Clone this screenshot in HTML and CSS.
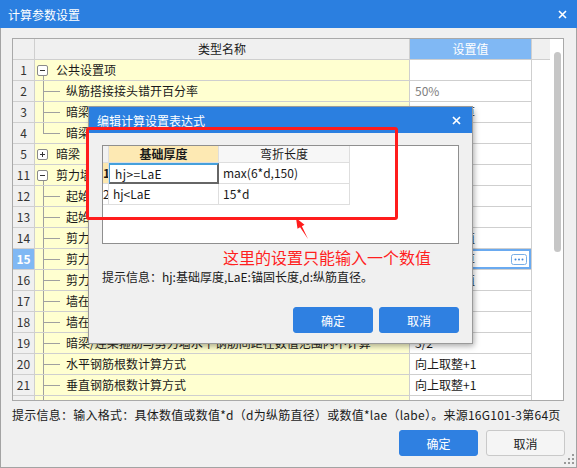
FILE: index.html
```html
<!DOCTYPE html>
<html lang="zh-CN">
<head>
<meta charset="utf-8">
<title>计算参数设置</title>
<link rel="stylesheet" href="styles.css">
</head>
<body>
<div class="window">
  <div class="titlebar">
    <span class="title">计算参数设置</span>
    <svg class="close" width="9" height="9" viewBox="0 0 9 9"><path d="M1 1L8 8M8 1L1 8" stroke="#fff" stroke-width="1.6" fill="none"/></svg>
  </div>
  <div class="content">
    <div class="grid-box">
      <div class="grid">
        <div class="row head">
          <div class="c num"></div><div class="c name">类型名称</div><div class="c val">设置值</div><div class="c fill"></div>
        </div>
        <div class="row"><div class="c num">1</div><div class="c name group open"><span class="tbox"></span>公共设置项</div><div class="c val"></div><div class="c fill"></div></div>
        <div class="row"><div class="c num">2</div><div class="c name child">纵筋搭接接头错开百分率</div><div class="c val muted">50%</div><div class="c fill"></div></div>
        <div class="row"><div class="c num">3</div><div class="c name child">暗梁纵筋锚固计算设置</div><div class="c val">按规范计算</div><div class="c fill"></div></div>
        <div class="row"><div class="c num">4</div><div class="c name child last">暗梁箍筋加密区设置</div><div class="c val">是</div><div class="c fill"></div></div>
        <div class="row"><div class="c num">5</div><div class="c name group"><span class="tbox plus"></span>暗梁</div><div class="c val"></div><div class="c fill"></div></div>
        <div class="row"><div class="c num">11</div><div class="c name group open"><span class="tbox"></span>剪力墙</div><div class="c val"></div><div class="c fill"></div></div>
        <div class="row"><div class="c num">12</div><div class="c name child">起始水平钢筋距楼面距离</div><div class="c val">50</div><div class="c fill"></div></div>
        <div class="row"><div class="c num">13</div><div class="c name child">起始竖向钢筋距暗柱边距离</div><div class="c val">s/2</div><div class="c fill"></div></div>
        <div class="row"><div class="c num">14</div><div class="c name child">剪力墙水平钢筋搭接长度</div><div class="c val">按规范取值</div><div class="c fill"></div></div>
        <div class="row"><div class="c num selected">15</div><div class="c name child">剪力墙竖向钢筋基础插筋弯折长度</div><div class="c val selected"><span>按规范计算</span><svg class="more" width="16" height="11" viewBox="0 0 16 11"><rect x="0.5" y="0.5" width="15" height="10" rx="2" fill="#fff" stroke="#78aee6"/><circle cx="4.5" cy="5.5" r="1" fill="#3f86d8"/><circle cx="8" cy="5.5" r="1" fill="#3f86d8"/><circle cx="11.5" cy="5.5" r="1" fill="#3f86d8"/></svg></div><div class="c fill"></div></div>
        <div class="row"><div class="c num">16</div><div class="c name child">剪力墙竖向钢筋顶部锚固长度</div><div class="c val">按规范取值</div><div class="c fill"></div></div>
        <div class="row"><div class="c num">17</div><div class="c name child">墙在基础内的水平钢筋根数</div><div class="c val">间距500</div><div class="c fill"></div></div>
        <div class="row"><div class="c num">18</div><div class="c name child">墙在基础内的拉筋设置</div><div class="c val">否</div><div class="c fill"></div></div>
        <div class="row"><div class="c num">19</div><div class="c name child">暗梁/连梁箍筋与剪力墙水平钢筋间距在数值范围内不计算</div><div class="c val">3/2</div><div class="c fill"></div></div>
        <div class="row"><div class="c num">20</div><div class="c name child">水平钢筋根数计算方式</div><div class="c val">向上取整+1</div><div class="c fill"></div></div>
        <div class="row"><div class="c num">21</div><div class="c name child">垂直钢筋根数计算方式</div><div class="c val">向上取整+1</div><div class="c fill"></div></div>
        <div class="row"><div class="c num">22</div><div class="c name child">墙拉筋布置构造</div><div class="c val">矩形布置</div><div class="c fill"></div></div>
      </div>
      <div class="vscroll"><div class="thumb"></div></div>
    </div>
    <div class="hint">提示信息：输入格式：具体数值或数值*d（d为纵筋直径）或数值*lae（labe）。来源16G101-3第64页</div>
    <div class="actions">
      <button class="btn primary">确定</button>
      <button class="btn">取消</button>
    </div>
  </div>

  <div class="dialog">
    <div class="dlg-title">
      <span class="title">编辑计算设置表达式</span>
      <svg class="close" width="9" height="9" viewBox="0 0 9 9"><path d="M1 1L8 8M8 1L1 8" stroke="#fff" stroke-width="1.7" fill="none"/></svg>
    </div>
    <div class="dlg-body">
      <div class="egrid">
        <div class="erow head">
          <div class="ec rh"></div><div class="ec h1">基础厚度</div><div class="ec h2">弯折长度</div>
        </div>
        <div class="erow">
          <div class="ec rh cur">1</div><div class="ec focus">hj&gt;=LaE</div><div class="ec">max(6*d,150)</div>
        </div>
        <div class="erow">
          <div class="ec rh">2</div><div class="ec">hj&lt;LaE</div><div class="ec">15*d</div>
        </div>
      </div>
      <div class="dlg-hint">提示信息：hj:基础厚度,LaE:锚固长度,d:纵筋直径。</div>
      <div class="dlg-actions">
        <button class="btn primary wide">确定</button>
        <button class="btn primary wide">取消</button>
      </div>
    </div>
  </div>

  <div class="annot-rect"></div>
  <svg class="annot-arrow" width="24" height="28" viewBox="0 0 24 28"><polygon points="8,4 16.5,10.7 13.9,12.2 20,25 12.1,13.2 9.5,14.7" fill="#ff1c1c"/></svg>
  <div class="annot-text">这里的设置只能输入一个数值</div>
  <svg class="grip" width="12" height="12" viewBox="0 0 12 12"><g fill="#9a9a9a"><rect x="9" y="1" width="2" height="2"/><rect x="9" y="5" width="2" height="2"/><rect x="5" y="5" width="2" height="2"/><rect x="9" y="9" width="2" height="2"/><rect x="5" y="9" width="2" height="2"/><rect x="1" y="9" width="2" height="2"/></g></svg>
</div>
</body>
</html>
```

FILE: styles.css
```css
* { box-sizing: border-box; }
html, body { margin: 0; padding: 0; }
body {
  font-family: "Noto Sans CJK SC", "Microsoft YaHei", sans-serif;
  font-size: 12px;
  color: #1a1a1a;
  background: #fff;
}
.window {
  position: relative;
  width: 577px;
  height: 468px;
  background: #f0f0f0;
  box-shadow: inset 0 0 0 1px #a3a3a3;
  display: flex;
  flex-direction: column;
  overflow: hidden;
}
.titlebar {
  height: 28px;
  flex: none;
  background: #2b7fe0;
  color: #fff;
  display: flex;
  align-items: center;
  padding: 0 10px 0 8px;
}
.titlebar .title, .dlg-title .title { flex: 1; }
.close { display: block; }

.content {
  flex: 1;
  padding: 10px 13px 0 12px;
  display: flex;
  flex-direction: column;
}
.grid-box {
  height: 363px;
  flex: none;
  border: 1px solid #a9a9a9;
  background: #fff;
  display: flex;
  overflow: hidden;
}
.grid { flex: 1; overflow: hidden; }
.row {
  display: grid;
  grid-template-columns: 22px 375px 122px 18px;
  height: 21px;
}
.c {
  border-right: 1px solid #cfcfcf;
  border-bottom: 1px solid #cfcfcf;
  line-height: 20px;
  white-space: nowrap;
  overflow: hidden;
}
.c.fill { border-right: none; border-bottom: none; }
.head .c { background: #f0f0f0; text-align: center; }
.head .c.fill { border-bottom: 1px solid #cfcfcf; }
.head .c.val { background: #80b8f4; color: #fff; padding-left: 0; }
.num { background: #f0f0f0; text-align: center; color: #333; }
.num.selected { background: #80b8f4; color: #fff; font-weight: bold; }
.name { background: #ffffd0; }
.name.group { display: flex; align-items: center; padding-left: 2px; }
.name.group.open {
  background: linear-gradient(#a0a0a0, #a0a0a0) 8px 15px / 1px 6px no-repeat, #ffffd0;
}
.name.child {
  padding-left: 31px;
  background:
    linear-gradient(#a0a0a0, #a0a0a0) 8px 0 / 1px 100% no-repeat,
    linear-gradient(#a0a0a0, #a0a0a0) 8px 10px / 17px 1px no-repeat,
    #ffffd0;
}
.name.child.last {
  background:
    linear-gradient(#a0a0a0, #a0a0a0) 8px 0 / 1px 11px no-repeat,
    linear-gradient(#a0a0a0, #a0a0a0) 8px 10px / 17px 1px no-repeat,
    #ffffd0;
}
.tbox {
  flex: none;
  width: 11px;
  height: 11px;
  margin-right: 8px;
  border: 1px solid #8a8a8a;
  border-radius: 2px;
  background: linear-gradient(#333, #333) center / 5px 1px no-repeat, #fff;
}
.tbox.plus {
  background:
    linear-gradient(#333, #333) center / 5px 1px no-repeat,
    linear-gradient(#333, #333) center / 1px 5px no-repeat,
    #fff;
}
.val { padding-left: 5px; background: #fff; }
.val.muted { color: #808080; }
.val.selected {
  box-shadow: inset 0 0 0 2px #6aaaf0;
  display: flex;
  align-items: center;
  justify-content: space-between;
  padding-right: 4px;
}
.more { display: block; }

.vscroll { width: 13px; flex: none; background: #fff; padding-top: 13px; }
.thumb { width: 7px; height: 200px; margin-left: 4px; border-radius: 4px; background: #c6c6c6; }

.hint { margin-top: 4px; line-height: 20px; white-space: nowrap; letter-spacing: 0.25px; }
.actions {
  margin-top: 5px;
  margin-right: -1px;
  display: flex;
  justify-content: flex-end;
  gap: 8px;
}
.btn {
  font: inherit;
  width: 79px;
  height: 26px;
  border-radius: 3px;
  border: 1px solid #c9c9c9;
  background: #f5f5f5;
  color: #222;
  padding: 0;
}
.btn.primary { background: #2f80e1; border-color: #2f80e1; color: #fff; }
.btn.wide { width: 80px; }

.dialog {
  position: absolute;
  left: 89px;
  top: 107px;
  width: 383px;
  height: 236px;
  background: #f0f0f0;
  box-shadow: 0 0 0 1px #9a9a9a, 2px 3px 6px rgba(0, 0, 0, 0.35);
  display: flex;
  flex-direction: column;
}
.dlg-title {
  height: 26px;
  flex: none;
  background: #2b7fe0;
  color: #fff;
  display: flex;
  align-items: center;
  padding: 0 11px 0 8px;
}
.dlg-body { padding: 12px 13px 10px 13px; display: flex; flex-direction: column; }
.egrid { height: 99px; border: 1px solid #8f8f8f; background: #fff; }
.erow { display: grid; grid-template-columns: 6px 110px 131px; height: 21px; }
.erow.head { height: 17px; }
.ec {
  border-right: 1px solid #dedede;
  border-bottom: 1px solid #dedede;
  line-height: 20px;
  padding-left: 4px;
  white-space: nowrap;
  overflow: hidden;
}
.head .ec { line-height: 16px; text-align: center; padding-left: 0; }
.ec.rh { padding-left: 0; background: #fff; }
.head .ec.rh { background: #f2f2f2; }
.ec.rh.cur { background: #fde8ae; font-weight: bold; }
.ec.h1 { background: #fde9b3; font-weight: bold; }
.ec.h2 { background: #f7f7f7; }
.ec.focus {
  border: 2px solid #666;
  border-top-color: #45a0dc;
  border-left: 1px solid #45a0dc;
  line-height: 17px;
  padding-left: 5px;
  letter-spacing: 0.4px;
}
.dlg-hint { margin-top: 24px; line-height: 18px; white-space: nowrap; }
.dlg-actions { margin-top: 21px; display: flex; justify-content: flex-end; gap: 6px; }

.annot-rect {
  position: absolute;
  left: 86px;
  top: 127px;
  width: 312px;
  height: 93px;
  border: 3px solid #ff1c1c;
  border-radius: 3px;
}
.annot-arrow { position: absolute; left: 288px; top: 214px; }
.annot-text {
  position: absolute;
  left: 223px;
  top: 247px;
  font-size: 16px;
  line-height: 20px;
  color: #ff1f1f;
  white-space: nowrap;
}
.grip { position: absolute; right: 2px; bottom: 3px; }
```
